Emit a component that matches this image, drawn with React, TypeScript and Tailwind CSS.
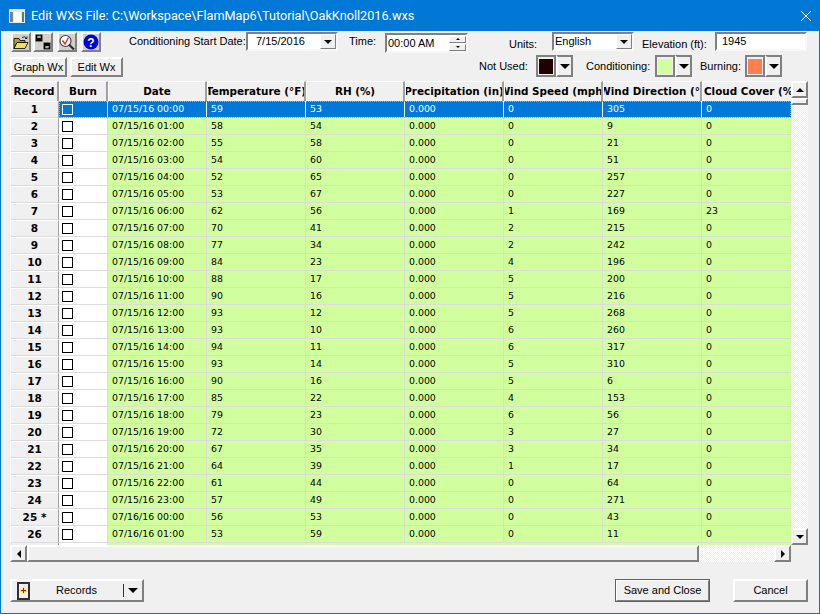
import React from "react";

const rows: [string, string, string, string, string, string, string][] = [
  ["1","07/15/16 00:00","59","53","0","305","0"],
  ["2","07/15/16 01:00","58","54","0","9","0"],
  ["3","07/15/16 02:00","55","58","0","21","0"],
  ["4","07/15/16 03:00","54","60","0","51","0"],
  ["5","07/15/16 04:00","52","65","0","257","0"],
  ["6","07/15/16 05:00","53","67","0","227","0"],
  ["7","07/15/16 06:00","62","56","1","169","23"],
  ["8","07/15/16 07:00","70","41","2","215","0"],
  ["9","07/15/16 08:00","77","34","2","242","0"],
  ["10","07/15/16 09:00","84","23","4","196","0"],
  ["11","07/15/16 10:00","88","17","5","200","0"],
  ["12","07/15/16 11:00","90","16","5","216","0"],
  ["13","07/15/16 12:00","93","12","5","268","0"],
  ["14","07/15/16 13:00","93","10","6","260","0"],
  ["15","07/15/16 14:00","94","11","6","317","0"],
  ["16","07/15/16 15:00","93","14","5","310","0"],
  ["17","07/15/16 16:00","90","16","5","6","0"],
  ["18","07/15/16 17:00","85","22","4","153","0"],
  ["19","07/15/16 18:00","79","23","6","56","0"],
  ["20","07/15/16 19:00","72","30","3","27","0"],
  ["21","07/15/16 20:00","67","35","3","34","0"],
  ["22","07/15/16 21:00","64","39","1","17","0"],
  ["23","07/15/16 22:00","61","44","0","64","0"],
  ["24","07/15/16 23:00","57","49","0","271","0"],
  ["25 *","07/16/16 00:00","56","53","0","43","0"],
  ["26","07/16/16 01:00","53","59","0","11","0"],
];

const raised = "border border-t-white border-l-white border-r-[#808080] border-b-[#808080] bg-[#f0f0f0]";
const raised2 = "border-2 border-t-white border-l-white border-r-[#808080] border-b-[#808080] bg-[#f0f0f0]";
const sunken = "border-2 border-t-[#808080] border-l-[#808080] border-r-[#f8f8f8] border-b-[#f8f8f8] bg-white";
const ui = "[font-family:'Liberation_Sans',Arial,sans-serif]";
const grid = "[font-family:'DejaVu_Sans',Verdana,sans-serif]";

const Tri = ({ dir = "down", size = 4 }: { dir?: "down" | "up" | "left" | "right"; size?: number }) => {
  const pts = { down: "0,0 8,0 4,4", up: "4,0 8,4 0,4", left: "4,0 4,8 0,4", right: "0,0 4,4 0,8" }[dir];
  const w = dir === "down" || dir === "up" ? 8 : 4;
  const h = dir === "down" || dir === "up" ? 4 : 8;
  return (
    <svg width={w * (size / 4)} height={h * (size / 4)} viewBox={`0 0 ${w} ${h}`} className="block">
      <polygon points={pts} fill="#000" />
    </svg>
  );
};

const ToolBtn = ({ children, cls }: { children: React.ReactNode; cls?: string }) => (
  <div className={`border-2 border-t-white border-l-white border-r-[#808080] border-b-[#808080] bg-[#d4d0c8] w-[20px] h-[20px] flex items-center justify-center ${cls ?? ""}`}>{children}</div>
);

const Head = ({ w, children }: { w: string; children: React.ReactNode }) => (
  <div className={`${w} shrink-0 h-[20px] border-t border-l border-t-white border-l-white border-r-2 border-r-[#a0a0a0] flex items-center justify-center overflow-hidden whitespace-nowrap font-bold text-[10.4px] text-black bg-[#f0f0f0]`}>
    {children}
  </div>
);

const Cell = ({ w, sel, children }: { w: string; sel: boolean; children: React.ReactNode }) => (
  <div className={`${w} shrink-0 h-[17px] pl-[4px] flex items-center border-r ${sel ? "border-r-white bg-[#0078d7] text-white" : "border-r-[#dcdcdc] bg-[#d2ff9e] text-black"} border-b border-b-[#dcdcdc] text-[9.4px] overflow-hidden whitespace-nowrap`}>
    {children}
  </div>
);

const Swatch = ({ color }: { color: string }) => (
  <div className="flex h-[22px]">
    <div className="border-2 border-[#808080] w-[20px] flex items-center justify-center bg-[#f0f0f0]">
      <div className="w-[14px] h-[15px]" style={{ background: color }} />
    </div>
    <div className="border-2 border-t-[#808080] border-r-[#808080] border-b-[#808080] border-l-white w-[17px] flex items-center justify-center bg-[#f0f0f0]"><Tri size={5} /></div>
  </div>
);

export default function App() {
  return (
    <div className={`w-[820px] h-[614px] flex flex-col bg-[#f0f0f0] border border-[#0078d7] overflow-hidden ${ui}`}>
      {/* title bar */}
      <div className="h-[30px] shrink-0 bg-[#0078d7] flex items-center text-white">
        <svg width="16" height="14" viewBox="0 0 16 14" className="ml-[8px]">
          <rect width="16" height="14" fill="#e8e8e8" />
          <rect x="1" y="3" width="3" height="10" fill="#708090" />
          <rect x="5" y="3" width="7" height="10" fill="#ffffff" />
          <rect x="13" y="3" width="2" height="10" fill="#3a8a8a" />
        </svg>
        <span className="ml-[6px] text-[12.7px] [font-family:'Roboto',sans-serif]">Edit WXS File: C:\Workspace\FlamMap6\Tutorial\OakKnoll2016.wxs</span>
        <svg width="12" height="12" viewBox="0 0 12 12" className="ml-auto mr-[7px]">
          <path d="M1 1 L11 11 M11 1 L1 11" stroke="#fff" strokeWidth="1" fill="none" />
        </svg>
      </div>

      {/* top row */}
      <div className="h-[22px] mt-[1px] shrink-0 flex items-start text-[11px] text-black">
        <ToolBtn cls="ml-[10px]">
          <svg width="17" height="15" viewBox="0 0 16 14">
            <path d="M1 3 H6 L7 5 H12 V7 H4 L1 13 Z" fill="#b8a030" stroke="#000" strokeWidth="0.8" />
            <path d="M4 7 H15 L12 13 H1 Z" fill="#f0e060" stroke="#000" strokeWidth="0.8" />
            <path d="M9 2 Q12 0 14 3 M14 1 V3 H12" stroke="#000" strokeWidth="0.8" fill="none" />
          </svg>
        </ToolBtn>
        <ToolBtn cls="ml-[2px]">
          <svg width="16" height="16" viewBox="0 0 14 14">
            <rect x="0.5" y="0.5" width="6" height="6" fill="#000" />
            <rect x="2" y="1.5" width="3" height="2" fill="#aaa" />
            <rect x="7.5" y="7.5" width="6" height="6" fill="#000" />
            <rect x="9" y="10.5" width="3" height="2" fill="#aaa" />
          </svg>
        </ToolBtn>
        <ToolBtn cls="ml-[4px]">
          <svg width="17" height="17" viewBox="0 0 16 16">
            <circle cx="6.5" cy="6.5" r="5.5" fill="#fff" stroke="#444" strokeWidth="1.2" />
            <path d="M3.5 6 L6 9.5 L9.5 3" stroke="#e02020" strokeWidth="1.3" fill="none" />
            <path d="M10 10 L15 15" stroke="#303030" strokeWidth="2.2" />
          </svg>
        </ToolBtn>
        <ToolBtn cls="ml-[4px]">
          <svg width="16" height="16" viewBox="0 0 16 16">
            <circle cx="8" cy="8" r="7.5" fill="#0000e0" />
            <text x="8" y="12.5" textAnchor="middle" fontSize="12" fontWeight="bold" fill="#fff" fontFamily="Liberation Sans">?</text>
          </svg>
        </ToolBtn>
        <span className="ml-[28px] w-[117px] mt-[1px] whitespace-nowrap">Conditioning Start Date:</span>
        <div className={`${sunken} w-[92px] h-[19px] flex items-center pl-[8px]`}>
          <span className="flex-1">7/15/2016</span>
          <div className={`${raised} w-[16px] h-[15px] flex items-center justify-center`}><Tri /></div>
        </div>
        <span className="ml-[11px] w-[36px] mt-[1px]">Time:</span>
        <div className={`${sunken} w-[83px] h-[20px] mt-[1px] flex items-center pl-[1px]`}>
          <span className="flex-1">00:00 AM</span>
          <div className="flex flex-col gap-[1px] w-[17px]">
            <div className={`${raised} h-[7px] flex items-center justify-center`}><Tri dir="up" size={2} /></div>
            <div className={`${raised} h-[7px] flex items-center justify-center`}><Tri size={2} /></div>
          </div>
        </div>
        <span className="ml-[41px] w-[43px] mt-[4px]">Units:</span>
        <div className={`${sunken} w-[82px] h-[19px] flex items-center pl-[1px]`}>
          <span className="flex-1">English</span>
          <div className={`${raised} w-[16px] h-[15px] flex items-center justify-center`}><Tri /></div>
        </div>
        <span className="ml-[8px] w-[73px] mt-[4px] whitespace-nowrap">Elevation (ft):</span>
        <div className={`${sunken} w-[92px] h-[19px] flex items-center pl-[5px]`}>1945</div>
      </div>

      {/* second row */}
      <div className="h-[23px] shrink-0 flex items-end text-[11px] text-black">
        <div className={`${raised2} ml-[9px] w-[57px] h-[20px] flex items-center justify-center whitespace-nowrap`}>Graph Wx</div>
        <div className={`${raised2} ml-[3px] w-[53px] h-[20px] flex items-center justify-center whitespace-nowrap`}>Edit Wx</div>
        <span className="ml-[356px] w-[57px] self-center mt-[2px]">Not Used:</span>
        <Swatch color="#200000" />
        <span className="ml-[13px] w-[69px] self-center mt-[2px]">Conditioning:</span>
        <Swatch color="#d2ff9e" />
        <span className="ml-[8px] w-[45px] self-center mt-[2px]">Burning:</span>
        <Swatch color="#ff7f50" />
      </div>

      {/* grid */}
      <div className="ml-[9px] mt-[4px] w-[798px] flex flex-col">
        <div className="flex h-[464px]">
          <div className={`w-[781px] shrink-0 overflow-hidden ${grid}`}>
            <div className="flex">
              <Head w="w-[49px]">Record</Head>
              <Head w="w-[49px]">Burn</Head>
              <Head w="w-[99px]">Date</Head>
              <Head w="w-[99px]">Temperature (°F)</Head>
              <Head w="w-[99px]">RH (%)</Head>
              <Head w="w-[99px]">Precipitation (in)</Head>
              <Head w="w-[99px]">Wind Speed (mph)</Head>
              <Head w="w-[99px]">Wind Direction (°)</Head>
              <Head w="w-[99px]">Cloud Cover (%)</Head>
            </div>
            {rows.map((r, i) => {
              const sel = i === 0;
              return (
                <div key={r[0]} className="flex relative">
                  <div className="w-[49px] shrink-0 h-[17px] border-b border-b-[#dcdcdc] border-r border-r-[#a0a0a0] border-t border-t-white border-l border-l-white bg-[#f0f0f0] flex items-center justify-center font-bold text-[10.5px] text-black whitespace-nowrap">{r[0]}</div>
                  <div className={`w-[49px] shrink-0 h-[17px] border-b border-b-[#dcdcdc] border-r border-r-[#dcdcdc] flex items-center pl-[3px] ${sel ? "bg-[#0078d7]" : "bg-white"}`}>
                    <div className={`w-[11px] h-[11px] border ${sel ? "border-white bg-[#0078d7]" : "border-black bg-white"}`} />
                  </div>
                  <Cell w="w-[99px]" sel={sel}>{r[1]}</Cell>
                  <Cell w="w-[99px]" sel={sel}>{r[2]}</Cell>
                  <Cell w="w-[99px]" sel={sel}>{r[3]}</Cell>
                  <Cell w="w-[99px]" sel={sel}>0.000</Cell>
                  <Cell w="w-[99px]" sel={sel}>{r[4]}</Cell>
                  <Cell w="w-[99px]" sel={sel}>{r[5]}</Cell>
                  <Cell w="w-[99px]" sel={sel}>{r[6]}</Cell>
                  {sel && <div className="absolute left-[49px] top-0 right-0 h-[17px] border border-dotted border-[#ff9a3c] pointer-events-none" />}
                </div>
              );
            })}
            <div className="flex h-[4px]">
              <div className="w-[49px] border-r border-r-[#a0a0a0] bg-[#f0f0f0]" />
              <div className="w-[49px] border-r border-r-[#dcdcdc] bg-white" />
              <div className="flex-1 bg-[#d2ff9e]" />
            </div>
          </div>
          {/* vertical scrollbar */}
          <div className="w-[17px] shrink-0 flex flex-col bg-[#f4f4f4]">
            <div className={`${raised2} h-[17px] flex items-center justify-center`}><Tri dir="up" /></div>
            <div className={`${raised2} h-[7px]`} />
            <div className="flex-1 bg-[repeating-conic-gradient(#f0f0f0_0_25%,#ffffff_0_50%)] bg-[length:2px_2px]" />
            <div className={`${raised2} h-[17px] flex items-center justify-center`}><Tri /></div>
          </div>
        </div>
        {/* horizontal scrollbar */}
        <div className="flex h-[17px] w-[781px]">
          <div className={`${raised2} w-[17px] shrink-0 flex items-center justify-center`}><Tri dir="left" /></div>
          <div className={`${raised2} w-[672px] shrink-0`} />
          <div className="flex-1 bg-[repeating-conic-gradient(#f0f0f0_0_25%,#ffffff_0_50%)] bg-[length:2px_2px]" />
          <div className={`${raised2} w-[17px] shrink-0 flex items-center justify-center`}><Tri dir="right" /></div>
        </div>
      </div>

      {/* bottom */}
      <div className="flex mt-[17px] ml-[9px] text-[11px] text-black">
        <div className={`${raised2} w-[134px] h-[23px] flex items-center`}>
          <div className="ml-[5px] w-[13px] h-[18px] border-2 border-[#303030] flex items-center justify-center bg-[#f0f0f0]">
            <svg width="7" height="7" viewBox="0 0 7 7">
              <path d="M3.5 0 V7 M0 3.5 H7" stroke="#ffee00" strokeWidth="2" />
              <path d="M3.5 1 V6 M1 3.5 H6" stroke="#e00000" strokeWidth="1" />
            </svg>
          </div>
          <span className="ml-[26px] w-[67px]">Records</span>
          <div className="h-[13px] border-l border-l-[#303030] w-[19px] flex items-center justify-center"><Tri size={5} /></div>
        </div>
        <div className="ml-[471px] w-[95px] h-[23px] border border-[#606060]">
          <div className={`${raised} w-full h-full flex items-center justify-center whitespace-nowrap`}>Save and Close</div>
        </div>
        <div className={`${raised2} ml-[23px] w-[75px] h-[23px] flex items-center justify-center`}>Cancel</div>
      </div>
    </div>
  );
}
